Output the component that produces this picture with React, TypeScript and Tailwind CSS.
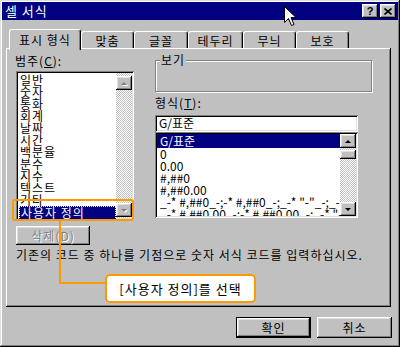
import React from "react";

const raised =
  "shadow-[inset_-1px_-1px_#000,inset_1px_1px_#fff,inset_-2px_-2px_#808080,inset_2px_2px_#dfdfdf]";
const sunken =
  "shadow-[inset_1px_1px_#808080,inset_-1px_-1px_#fff,inset_2px_2px_#000,inset_-2px_-2px_#dfdfdf]";

function Arrow({ dir, disabled }: { dir: "up" | "down"; disabled?: boolean }) {
  const pts = dir === "up" ? "4,1 7,4 1,4" : "1,1 7,1 4,4";
  return (
    <div className={`w-[16px] h-[14px] bg-[#c0c0c0] ${raised} flex items-center justify-center`}>
      <svg width="8" height="5" viewBox="0 0 8 5">
        {disabled && <polygon points={dir === "up" ? "5,2 8,5 2,5" : "2,2 8,2 5,5"} fill="#fff" />}
        <polygon points={pts} fill={disabled ? "#808080" : "#000"} />
      </svg>
    </div>
  );
}

const track =
  "bg-[repeating-conic-gradient(#c0c0c0_0%_25%,#ffffff_0%_50%)] bg-[length:2px_2px]";

function Tab({ label, w, active }: { label: string; w: number; active?: boolean }) {
  return (
    <div
      style={{ width: w }}
      className={
        active
          ? "relative z-10 h-[21px] -mb-[2px] bg-[#c0c0c0] border-l border-t border-white rounded-t-[3px] shadow-[inset_-1px_0_#808080] border-r border-r-black flex items-start justify-center pt-[3px] text-[12px] leading-[14px] tracking-[1px]"
          : "h-[17px] bg-[#c0c0c0] border-l border-t border-white rounded-t-[3px] shadow-[inset_-1px_0_#808080] border-r border-r-black flex items-start justify-center pt-[2px] text-[12px] leading-[14px] tracking-[1px]"
      }
    >
      {label}
    </div>
  );
}

export default function App() {
  const cats = ["일반", "숫자", "통화", "회계", "날짜", "시간", "백분율", "분수", "지수", "텍스트", "기타"];
  const fmts = [
    "0",
    "0.00",
    "#,##0",
    "#,##0.00",
    '_-* #,##0_-;-* #,##0_-;_-* "-"_-;_-@_-',
    '_-* #,##0.00_-;-* #,##0.00_-;_-* "-"??_-;_-@_-',
  ];
  return (
    <div className="w-[400px] h-[347px] relative overflow-hidden bg-[#c0c0c0] font-['Noto_Sans_CJK_KR',sans-serif] text-black p-[2px] shadow-[inset_-1px_-1px_#000,inset_1px_1px_#dfdfdf,inset_-2px_-2px_#808080,inset_2px_2px_#fff]">
      {/* Title bar */}
      <div className="h-[18px] bg-[#000080] flex items-center pl-[3px] pr-[2px]">
        <span className="text-white text-[13px] leading-[14px] tracking-[1px]">셀 서식</span>
        <div className="ml-auto flex gap-[2px]">
          <div className={`w-[16px] h-[14px] bg-[#c0c0c0] ${raised} flex items-center justify-center text-[11px] leading-[11px] font-bold font-['Liberation_Sans',sans-serif]`}>
            ?
          </div>
          <div className={`w-[16px] h-[14px] bg-[#c0c0c0] ${raised} flex items-center justify-center`}>
            <svg width="8" height="7" viewBox="0 0 8 7">
              <path d="M0.5 0.5 L7.5 6.5 M7.5 0.5 L0.5 6.5" stroke="#000" strokeWidth="1.6" />
            </svg>
          </div>
        </div>
      </div>

      {/* Tabs */}
      <div className="mt-[9px] ml-[7px] flex items-end h-[19px]">
        <Tab label="표시 형식" w={72} active />
        <Tab label="맞춤" w={53} />
        <Tab label="글꼴" w={54} />
        <Tab label="테두리" w={55} />
        <Tab label="무늬" w={53} />
        <Tab label="보호" w={53} />
      </div>

      {/* Panel */}
      <div className="ml-[4px] w-[385px] h-[259px] bg-[#c0c0c0] shadow-[inset_-1px_-1px_#000,inset_1px_1px_#fff,inset_-2px_-2px_#808080] pt-[6px] pl-[10px] text-[12px]">
        <div className="flex">
          {/* Left column */}
          <div className="w-[118px] flex flex-col">
            <div className="h-[13px] leading-[13px] ml-[-1px] tracking-[1px]">
              범주(<span className="underline">C</span>):
            </div>
            <div className={`mt-[4px] h-[149px] bg-white ${sunken} p-[2px] flex`}>
              <div className="flex-1 flex flex-col pt-[1px]">
                {cats.map((c) => (
                  <div key={c} className="h-[12px] leading-[12px] pl-[2px] text-[12px] tracking-[1px] whitespace-nowrap">
                    {c}
                  </div>
                ))}
                <div className="h-[14px] leading-[12px] ml-[1px] pl-[1px] bg-[#000080] text-white border border-dotted border-[#ffff80] tracking-[1px] whitespace-nowrap">
                  사용자 정의
                </div>
              </div>
              <div className={`w-[16px] flex flex-col ${track}`}>
                <div className="mt-[3px]">
                  <Arrow dir="up" disabled />
                </div>
                <div className="flex-1" />
                <div className="mb-[1px]">
                  <Arrow dir="down" disabled />
                </div>
              </div>
            </div>
            <div className={`mt-[6px] w-[74px] h-[19px] ${raised} flex items-center justify-center text-[#808080] [text-shadow:1px_1px_#fff] leading-[12px] tracking-[1px]`}>
              삭제(D)
            </div>
          </div>

          {/* Right column */}
          <div className="ml-[21px] w-[217px] flex flex-col">
            <div className="relative mt-[6px] h-[32px] border border-[#808080] shadow-[inset_1px_1px_#fff,1px_1px_#fff]">
              <span className="absolute left-[4px] -top-[8px] px-[1px] bg-[#c0c0c0] leading-[13px] tracking-[1px]">보기</span>
            </div>
            <div className="mt-[5px] h-[12px] leading-[12px] tracking-[1px]">
              형식(<span className="underline">T</span>):
            </div>
            <div className={`mt-[6px] w-[203px] h-[17px] bg-white ${sunken} pl-[4px] pt-[2px] leading-[12px]`}>G/표준</div>
            <div className={`w-[203px] h-[86px] bg-white ${sunken} p-[2px] flex`}>
              <div className="flex-1 flex flex-col overflow-x-hidden">
                <div className="h-[14px] leading-[14px] bg-[#000080] text-white pl-[3px] shrink-0">G/표준</div>
                {fmts.map((f) => (
                  <div key={f} className="h-[12px] leading-[12px] pl-[3px] whitespace-nowrap shrink-0">
                    {f}
                  </div>
                ))}
              </div>
              <div className={`w-[16px] flex flex-col ${track}`}>
                <Arrow dir="up" />
                <div className={`mt-[2px] w-[16px] h-[9px] bg-[#c0c0c0] ${raised}`} />
                <div className="flex-1" />
                <Arrow dir="down" />
              </div>
            </div>
          </div>
        </div>
        <div className="mt-[3px] leading-[14px] whitespace-nowrap tracking-[1px]">
          기존의 코드 중 하나를 기점으로 숫자 서식 코드를 입력하십시오.
        </div>
      </div>

      {/* Buttons */}
      <div className="mt-[10px] flex justify-end gap-[6px] pr-[6px] text-[12px]">
        <div className="w-[75px] h-[21px] border border-black">
          <div className={`w-full h-full ${raised} flex items-center justify-center leading-[12px] tracking-[1px]`}>확인</div>
        </div>
        <div className={`w-[75px] h-[21px] ${raised} flex items-center justify-center leading-[12px] tracking-[1px]`}>취소</div>
      </div>

      {/* Annotation overlays */}
      <div className="absolute left-[12px] top-[199px] w-[122px] h-[22px] border-2 border-[#ff9900] rounded-[3px]" />
      <div className="absolute left-[59px] top-[221px] w-[2px] h-[63px] bg-[#ff9900]" />
      <div className="absolute left-[59px] top-[282px] w-[48px] h-[2px] bg-[#ff9900]" />
      <div className="absolute left-[105px] top-[274px] w-[151px] h-[29px] bg-white border-2 border-[#ff9900] rounded-[5px] flex items-center justify-center text-[13px] leading-[14px] tracking-[1px]">
        [사용자 정의]를 선택
      </div>

      {/* Cursor */}
      <svg className="absolute left-[284px] top-[6px]" width="13" height="21" viewBox="0 0 13 21">
        <path d="M0.5 0.5 L0.5 16.5 L4.5 12.5 L7.5 19.5 L10 18.5 L7 11.5 L12 11.5 Z" fill="#fff" stroke="#000" strokeWidth="1" />
      </svg>
    </div>
  );
}
